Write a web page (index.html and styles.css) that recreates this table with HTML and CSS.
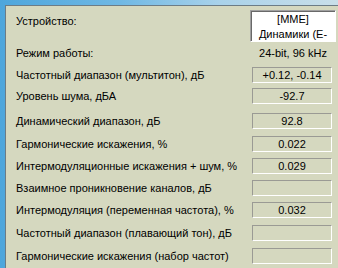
FILE: index.html
```html
<!DOCTYPE html>
<html lang="ru">
<head>
<meta charset="utf-8">
<link rel="stylesheet" href="styles.css">
</head>
<body>
<div class="frame">
  <div class="panel">
    <div class="row row-device">
      <div class="label">Устройство:</div>
      <div class="cell">
        <div class="device">[MME]<br>Динамики (E-</div>
      </div>
    </div>
    <div class="row row-mode">
      <div class="label">Режим работы:</div>
      <div class="cell"><div class="plain">24-bit, 96 kHz</div></div>
    </div>
    <div class="row row-val g5first">
      <div class="label">Частотный диапазон (мультитон), дБ</div>
      <div class="cell"><div class="box">+0.12, -0.14</div></div>
    </div>
    <div class="row row-val g5">
      <div class="label">Уровень шума, дБА</div>
      <div class="cell"><div class="box">-92.7</div></div>
    </div>
    <div class="row row-val g9">
      <div class="label">Динамический диапазон, дБ</div>
      <div class="cell"><div class="box">92.8</div></div>
    </div>
    <div class="row row-val g7">
      <div class="label">Гармонические искажения, %</div>
      <div class="cell"><div class="box">0.022</div></div>
    </div>
    <div class="row row-val g6">
      <div class="label">Интермодуляционные искажения + шум, %</div>
      <div class="cell"><div class="box">0.029</div></div>
    </div>
    <div class="row row-val g6">
      <div class="label">Взаимное проникновение каналов, дБ</div>
      <div class="cell"><div class="box"></div></div>
    </div>
    <div class="row row-val g6">
      <div class="label">Интермодуляция (переменная частота), %</div>
      <div class="cell"><div class="box">0.032</div></div>
    </div>
    <div class="row row-val g7">
      <div class="label">Частотный диапазон (плавающий тон), дБ</div>
      <div class="cell"><div class="box"></div></div>
    </div>
    <div class="row row-val g7">
      <div class="label">Гармонические искажения (набор частот)</div>
      <div class="cell"><div class="box"></div></div>
    </div>
  </div>
</div>
</body>
</html>
```
FILE: styles.css
```css
html, body {
  margin: 0;
  padding: 0;
  width: 338px;
  height: 268px;
  overflow: hidden;
}
body {
  font-family: "Liberation Sans", Arial, sans-serif;
  font-size: 11px;
  color: #000;
  background: #d5d8bf;
}
.frame {
  height: 268px;
  padding: 5px 0 0 5px;
  box-sizing: border-box;
  background: linear-gradient(90deg, #4ea6dc 0px, #6fb8e4 120px, #a9d2ea 220px, #c9dfe9 338px);
}
.panel {
  height: 100%;
  background: #d5d8bf;
  border-top: 1px solid #6c7c86;
  border-left: 1px solid #6c7c86;
  padding: 4px 2px 0 10px;
  box-sizing: border-box;
  display: flex;
  flex-direction: column;
}
.row {
  display: flex;
  align-items: center;
}
.label {
  flex: 1;
  white-space: nowrap;
  line-height: 14px;
}
.cell {
  width: 86px;
  flex: none;
  display: flex;
  justify-content: center;
}
.row-device {
  height: 32px;
  align-items: flex-start;
}
.row-device .label {
  margin-top: 4px;
}
.device {
  width: 86px;
  height: 32px;
  box-sizing: border-box;
  background: #fff;
  border-top: 1px solid #a0a0a0;
  border-left: 1px solid #a0a0a0;
  border-bottom: 1px solid #fff;
  border-right: 1px solid #fff;
  box-shadow: inset 1px 1px 0 #696969;
  text-align: center;
  line-height: 15px;
  padding-top: 1px;
  overflow: hidden;
}
.row-mode {
  height: 21px;
}
.plain {
  text-align: center;
  line-height: 14px;
}
.row-val {
  height: 16px;
}
.box {
  width: 80px;
  height: 16px;
  box-sizing: border-box;
  margin-left: 2px;
  margin-right: 4px;
  border-top: 1px solid #9a9a94;
  border-left: 1px solid #9a9a94;
  border-bottom: 1px solid #fff;
  border-right: 1px solid #fff;
  text-align: center;
  line-height: 14px;
}
.g5first { margin-top: 4px; }
.g5 { margin-top: 5px; }
.g6 { margin-top: 6px; }
.g7 { margin-top: 7px; }
.g9 { margin-top: 9px; }
```
